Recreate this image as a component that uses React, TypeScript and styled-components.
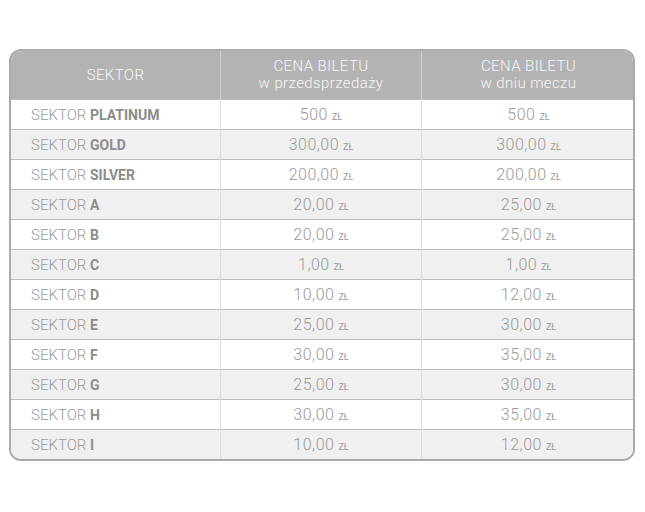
import React from "react";
import styled, { createGlobalStyle } from "styled-components";

const Global = createGlobalStyle`
  html, body { margin: 0; padding: 0; background: #fff; }
  body { font-family: Roboto, "Liberation Sans", sans-serif; }
`;

const Page = styled.div`
  padding: 49px 10px 0 9px;
`;

const Frame = styled.div`
  width: 626px;
  box-sizing: border-box;
  border: 2px solid #ababab;
  border-radius: 12px;
  overflow: hidden;
`;

const Table = styled.table`
  width: 100%;
  border-collapse: collapse;
  table-layout: fixed;
`;

const Head = styled.th<{ $w: number }>`
  width: ${(p) => p.$w}px;
  height: 48px;
  padding: 0;
  background: #b3b3b3;
  color: #f7f7f7;
  font-weight: 300;
  font-size: 15px;
  letter-spacing: 0.4px;
  line-height: 17px;
  text-align: center;
  border-left: 1px solid #cfcfcf;
  &:first-child { border-left: none; }
`;

const Row = styled.tr<{ $alt: boolean }>`
  background: ${(p) => (p.$alt ? "#f0f0f0" : "#ffffff")};
  border-top: 1px solid #bdbdbd;
`;

const Cell = styled.td<{ $left?: boolean }>`
  height: 29px;
  padding: 0 0 0 ${(p) => (p.$left ? "20px" : "0")};
  text-align: ${(p) => (p.$left ? "left" : "center")};
  color: #9a9a9a;
  font-size: ${(p) => (p.$left ? "15px" : "16px")};
  letter-spacing: ${(p) => (p.$left ? "0" : "0.5px")};
  font-weight: 300;
  border-left: 1px solid #dedede;
  &:first-child { border-left: none; }
`;

const Strong = styled.b`
  font-weight: 700;
  color: #8c8c8c;
  font-size: 14px;
`;

const Unit = styled.span`
  font-size: 9px;
  font-weight: 400;
  letter-spacing: 0;
  margin-left: 4px;
`;

const rows: [string, string, string][] = [
  ["PLATINUM", "500", "500"],
  ["GOLD", "300,00", "300,00"],
  ["SILVER", "200,00", "200,00"],
  ["A", "20,00", "25,00"],
  ["B", "20,00", "25,00"],
  ["C", "1,00", "1,00"],
  ["D", "10,00", "12,00"],
  ["E", "25,00", "30,00"],
  ["F", "30,00", "35,00"],
  ["G", "25,00", "30,00"],
  ["H", "30,00", "35,00"],
  ["I", "10,00", "12,00"],
];

export default function App() {
  return (
    <>
      <Global />
      <Page>
        <Frame>
          <Table>
            <thead>
              <tr>
                <Head $w={209}>SEKTOR</Head>
                <Head $w={200}>
                  CENA BILETU
                  <br />w przedsprzedaży
                </Head>
                <Head $w={213}>
                  CENA BILETU
                  <br />w dniu meczu
                </Head>
              </tr>
            </thead>
            <tbody>
              {rows.map(([s, a, b], i) => (
                <Row key={s} $alt={i % 2 === 1}>
                  <Cell $left>
                    SEKTOR <Strong>{s}</Strong>
                  </Cell>
                  <Cell>
                    {a}
                    <Unit>ZŁ</Unit>
                  </Cell>
                  <Cell>
                    {b}
                    <Unit>ZŁ</Unit>
                  </Cell>
                </Row>
              ))}
            </tbody>
          </Table>
        </Frame>
      </Page>
    </>
  );
}
